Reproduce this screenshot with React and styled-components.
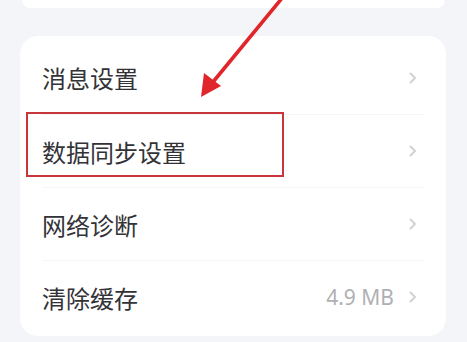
import React from 'react';
import styled, { createGlobalStyle } from 'styled-components';

const GlobalStyle = createGlobalStyle`
  html, body {
    margin: 0;
    padding: 0;
    background: #f4f5f9;
  }
  body {
    font-family: "Noto Sans", "Noto Sans CJK SC", sans-serif;
  }
`;

const Page = styled.div`
  position: relative;
  width: 467px;
  height: 342px;
  overflow: hidden;
  background: #f4f5f9;
`;

const TopCard = styled.div`
  height: 8px;
  margin: 0 22px 0 22px;
  background: #fff;
  border-radius: 0 0 18px 18px;
`;

const Card = styled.div`
  margin: 28px 21px 0 20px;
  padding: 5px 0 3px;
  background: #fff;
  border-radius: 18px;
`;

const Row = styled.div`
  display: flex;
  align-items: center;
  height: 73px;
  margin: 0 22px 0 22px;
  padding-right: 7px;
  border-top: ${p => (p.$first ? 'none' : '1px solid #f6f6f8')};
  box-sizing: border-box;
`;

const Label = styled.span`
  flex: 1;
  font-family: "Noto Sans CJK SC", sans-serif;
  font-size: 24px;
  font-weight: 400;
  color: #333337;
`;

const Value = styled.span`
  font-family: "Noto Sans", sans-serif;
  font-size: 21px;
  color: #b0b0b4;
  margin-right: 14px;
`;

const Highlight = styled.div`
  position: absolute;
  left: 26px;
  top: 112px;
  width: 258px;
  height: 65px;
  border: 2px solid #c8363c;
  box-sizing: border-box;
`;

const Arrow = styled.svg`
  position: absolute;
  left: 0;
  top: 0;
  pointer-events: none;
`;

const Chevron = () => (
  <svg width="9" height="14" viewBox="0 0 9 14">
    <polyline points="2.5,2.5 7,7 2.5,11.5" fill="none" stroke="#d2d2d6" strokeWidth="2" strokeLinecap="round" strokeLinejoin="round" />
  </svg>
);

const items = [
  { label: '消息设置' },
  { label: '数据同步设置' },
  { label: '网络诊断' },
  { label: '清除缓存', value: '4.9 MB' },
];

export default function App() {
  return (
    <Page>
      <GlobalStyle />
      <TopCard />
      <Card>
        {items.map((it, i) => (
          <Row key={it.label} $first={i === 0}>
            <Label>{it.label}</Label>
            {it.value && <Value>{it.value}</Value>}
            <Chevron />
          </Row>
        ))}
      </Card>
      <Highlight />
      <Arrow width="467" height="342" viewBox="0 0 467 342">
        <line x1="292" y1="-14" x2="213" y2="82" stroke="#e0262b" strokeWidth="3.6" strokeLinecap="round" />
        <polygon points="201,97 204,73 221,86" fill="#e0262b" />
      </Arrow>
    </Page>
  );
}
